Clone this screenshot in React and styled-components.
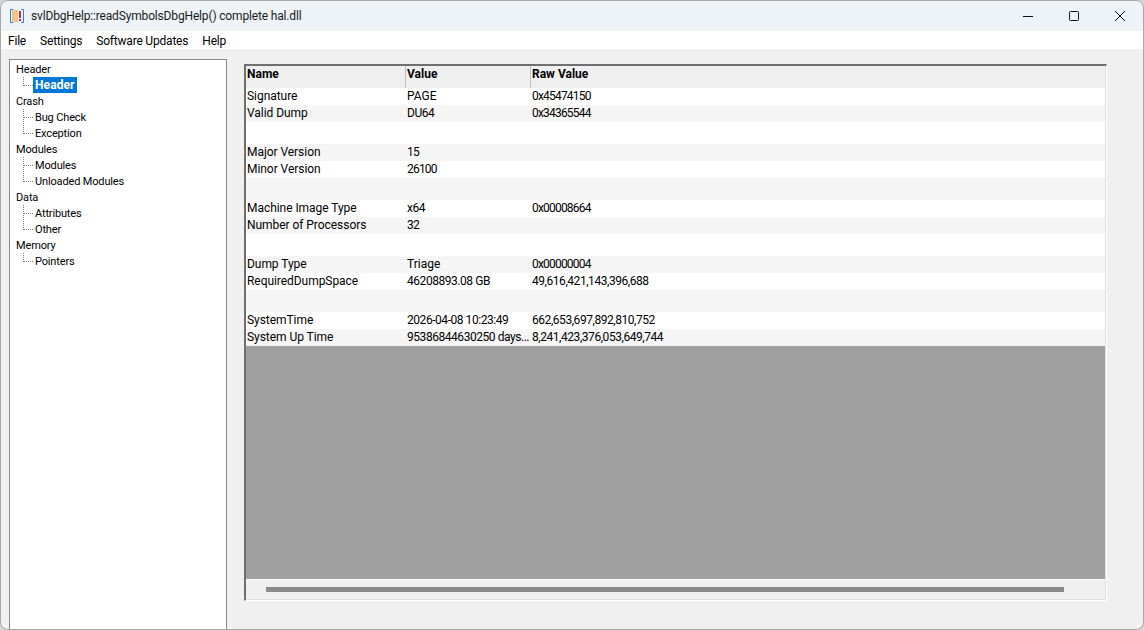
import React from "react";
import styled, { createGlobalStyle } from "styled-components";

const GlobalStyle = createGlobalStyle`
    html, body {
        margin: 0;
        padding: 0;
        background: #d8d6d2;
    }
    * {
        box-sizing: border-box;
    }
`

const Window = styled('div')`
    width: 1144px;
    height: 630px;
    display: flex;
    flex-direction: column;
    background: #f0f0f0;
    border: 1px solid #a8a8a8;
    border-radius: 8px;
    overflow: hidden;
    font-family: Roboto, "Noto Sans", sans-serif;
    font-size: 12px;
    color: #000;
`

const TitleBar = styled('div')`
    height: 30px;
    flex: none;
    display: flex;
    align-items: center;
    background: #eef3f8;
    padding-left: 8px;
`

const TitleText = styled('span')`
    margin-left: 6px;
    font-size: 12px;
    letter-spacing: -0.16px;
    color: #1a1a1a;
`

const WindowControls = styled('div')`
    margin-left: auto;
    display: flex;
    height: 100%;
    align-items: center;
`

const ControlButton = styled('div')`
    width: 46px;
    height: 100%;
    display: flex;
    align-items: center;
    justify-content: center;
`

const MenuBar = styled('div')`
    height: 18px;
    flex: none;
    display: flex;
    align-items: center;
    gap: 14px;
    padding: 2px 0 0 7px;
    background: #fff;
    letter-spacing: -0.2px;
`

const Body = styled('div')`
    flex: 1;
    display: flex;
    min-height: 0;
    padding: 10px 36px 0 8px;
`

const TreePane = styled('div')`
    width: 218px;
    flex: none;
    background: #fff;
    border: 1px solid #828790;
    border-bottom: none;
    padding: 1px 0 0 4px;
    font-size: 11px;
    letter-spacing: -0.15px;
`

const TreeRow = styled('div')`
    height: 16px;
    display: flex;
    align-items: center;
    position: relative;
    padding-left: ${props => (props.$child ? "19px" : "0")};
    white-space: nowrap;
`

const Connector = styled('span')`
    position: absolute;
    left: 9px;
    top: ${props => (props.$first ? "0" : "-8px")};
    height: ${props => (props.$first ? "9px" : "17px")};
    width: 10px;
    border-left: 1px dotted #808080;
    border-bottom: 1px dotted #808080;
`

const TreeLabel = styled('span')`
    height: 16px;
    line-height: 17px;
    padding: 0 2px;
    ${props => props.$selected && `
        background: #0078d7;
        color: #fff;
        font-weight: 700;
        font-size: 12px;
        letter-spacing: 0.1px;
    `}
`

const Splitter = styled('div')`
    width: 17px;
    flex: none;
`

const TablePanel = styled('div')`
    flex: 1;
    min-width: 0;
    height: 537px;
    margin-top: 5px;
    border-top: 2px solid #6f6f6f;
    border-left: 2px solid #6f6f6f;
    border-right: 1px solid #fff;
    border-bottom: 1px solid #fff;
`

const TableInner = styled('div')`
    height: 100%;
    display: flex;
    flex-direction: column;
    background: #a0a0a0;
    border-right: 1px solid #e0e0e0;
    border-bottom: 1px solid #e0e0e0;
`

const HeaderRow = styled('div')`
    height: 22px;
    flex: none;
    display: flex;
    background: #f0f0f0;
    font-weight: 700;
`

const HeaderCell = styled('div')`
    width: ${props => props.$width}px;
    flex: none;
    padding-left: 1px;
    line-height: 17px;
    border-right: 1px solid #c0c0c0;
    &:last-child {
        border-right: none;
        flex: 1;
    }
`

const Row = styled('div')`
    height: ${props => props.$height}px;
    flex: none;
    display: flex;
    line-height: 17px;
    background: ${props => (props.$alt ? "#f5f5f5" : "#fff")};
`

const Cell = styled('div')`
    width: ${props => props.$width}px;
    flex: none;
    padding-left: 1px;
    white-space: nowrap;
    overflow: hidden;
    letter-spacing: ${props => props.$spacing}px;
`

const Blank = styled('div')`
    flex: 1;
`

const ScrollArea = styled('div')`
    height: 20px;
    flex: none;
    display: flex;
    align-items: center;
    padding: 0 41px 0 20px;
    background: #f0f0f0;
    border-top: 1px solid #fff;
`

const ScrollThumb = styled('div')`
    width: 100%;
    height: 5px;
    background: #8a8a8a;
`

const AppIcon = () => (
    <svg width="16" height="16" viewBox="0 0 16 16">
        <path d="M4 1.5H1.5V14.5H4" fill="none" stroke="#2f7fc1" />
        <path d="M12 1.5H14.5V14.5H12" fill="none" stroke="#2f7fc1" />
        <rect x="3" y="2" width="6" height="12" fill="#f2c48d" />
        <rect x="10" y="3" width="2" height="7" fill="#e02020" />
        <rect x="10" y="11" width="2" height="2" fill="#e02020" />
    </svg>
)

const columns = [160, 125, 574];

const rows = [
    ["Signature", "PAGE", "0x45474150"],
    ["Valid Dump", "DU64", "0x34365544"],
    null,
    ["Major Version", "15", ""],
    ["Minor Version", "26100", ""],
    null,
    ["Machine Image Type", "x64", "0x00008664"],
    ["Number of Processors", "32", ""],
    null,
    ["Dump Type", "Triage", "0x00000004"],
    ["RequiredDumpSpace", "46208893.08 GB", "49,616,421,143,396,688"],
    null,
    ["SystemTime", "2026-04-08 10:23:49", "662,653,697,892,810,752"],
    ["System Up Time", "95386844630250 days...", "8,241,423,376,053,649,744"],
];

const tree = [
    { label: "Header" },
    { label: "Header", child: true, first: true, selected: true },
    { label: "Crash" },
    { label: "Bug Check", child: true, first: true },
    { label: "Exception", child: true },
    { label: "Modules" },
    { label: "Modules", child: true, first: true },
    { label: "Unloaded Modules", child: true },
    { label: "Data" },
    { label: "Attributes", child: true, first: true },
    { label: "Other", child: true },
    { label: "Memory" },
    { label: "Pointers", child: true, first: true },
];

// Roboto digits are wider than the ones in the screenshot
const digitSpacing = (text) => {
    if (/^(0x)?\d+$/.test(text)) return -0.8;
    if (/\d{2}/.test(text)) return -0.45;
    return 0;
}

const App = () => {
    return (
        <Window>
            <GlobalStyle />
            <TitleBar>
                <AppIcon />
                <TitleText>svlDbgHelp::readSymbolsDbgHelp() complete hal.dll</TitleText>
                <WindowControls>
                    <ControlButton>
                        <svg width="12" height="12" viewBox="0 0 12 12"><path d="M1 6.5H11" stroke="#111" /></svg>
                    </ControlButton>
                    <ControlButton>
                        <svg width="12" height="12" viewBox="0 0 12 12"><rect x="1.5" y="1.5" width="9" height="9" rx="1" fill="none" stroke="#111" /></svg>
                    </ControlButton>
                    <ControlButton>
                        <svg width="12" height="12" viewBox="0 0 12 12"><path d="M1 1L11 11M11 1L1 11" stroke="#111" /></svg>
                    </ControlButton>
                </WindowControls>
            </TitleBar>
            <MenuBar>
                <span>File</span>
                <span>Settings</span>
                <span>Software Updates</span>
                <span>Help</span>
            </MenuBar>
            <Body>
                <TreePane>
                    {tree.map((item, i) => (
                        <TreeRow key={i} $child={item.child}>
                            {item.child && <Connector $first={item.first} />}
                            <TreeLabel $selected={item.selected}>{item.label}</TreeLabel>
                        </TreeRow>
                    ))}
                </TreePane>
                <Splitter />
                <TablePanel>
                    <TableInner>
                        <HeaderRow>
                            <HeaderCell $width={columns[0]}>Name</HeaderCell>
                            <HeaderCell $width={columns[1]}>Value</HeaderCell>
                            <HeaderCell $width={columns[2]}>Raw Value</HeaderCell>
                        </HeaderRow>
                        {rows.map((row, i) => (
                            <Row key={i} $alt={i % 2 === 1} $height={row ? 17 : 22}>
                                {row && row.map((text, c) => (
                                    <Cell key={c} $width={columns[c]} $spacing={c === 0 ? -0.05 : digitSpacing(text)}>{text}</Cell>
                                ))}
                            </Row>
                        ))}
                        <Blank />
                        <ScrollArea>
                            <ScrollThumb />
                        </ScrollArea>
                    </TableInner>
                </TablePanel>
            </Body>
        </Window>
    )
}

export default App;
